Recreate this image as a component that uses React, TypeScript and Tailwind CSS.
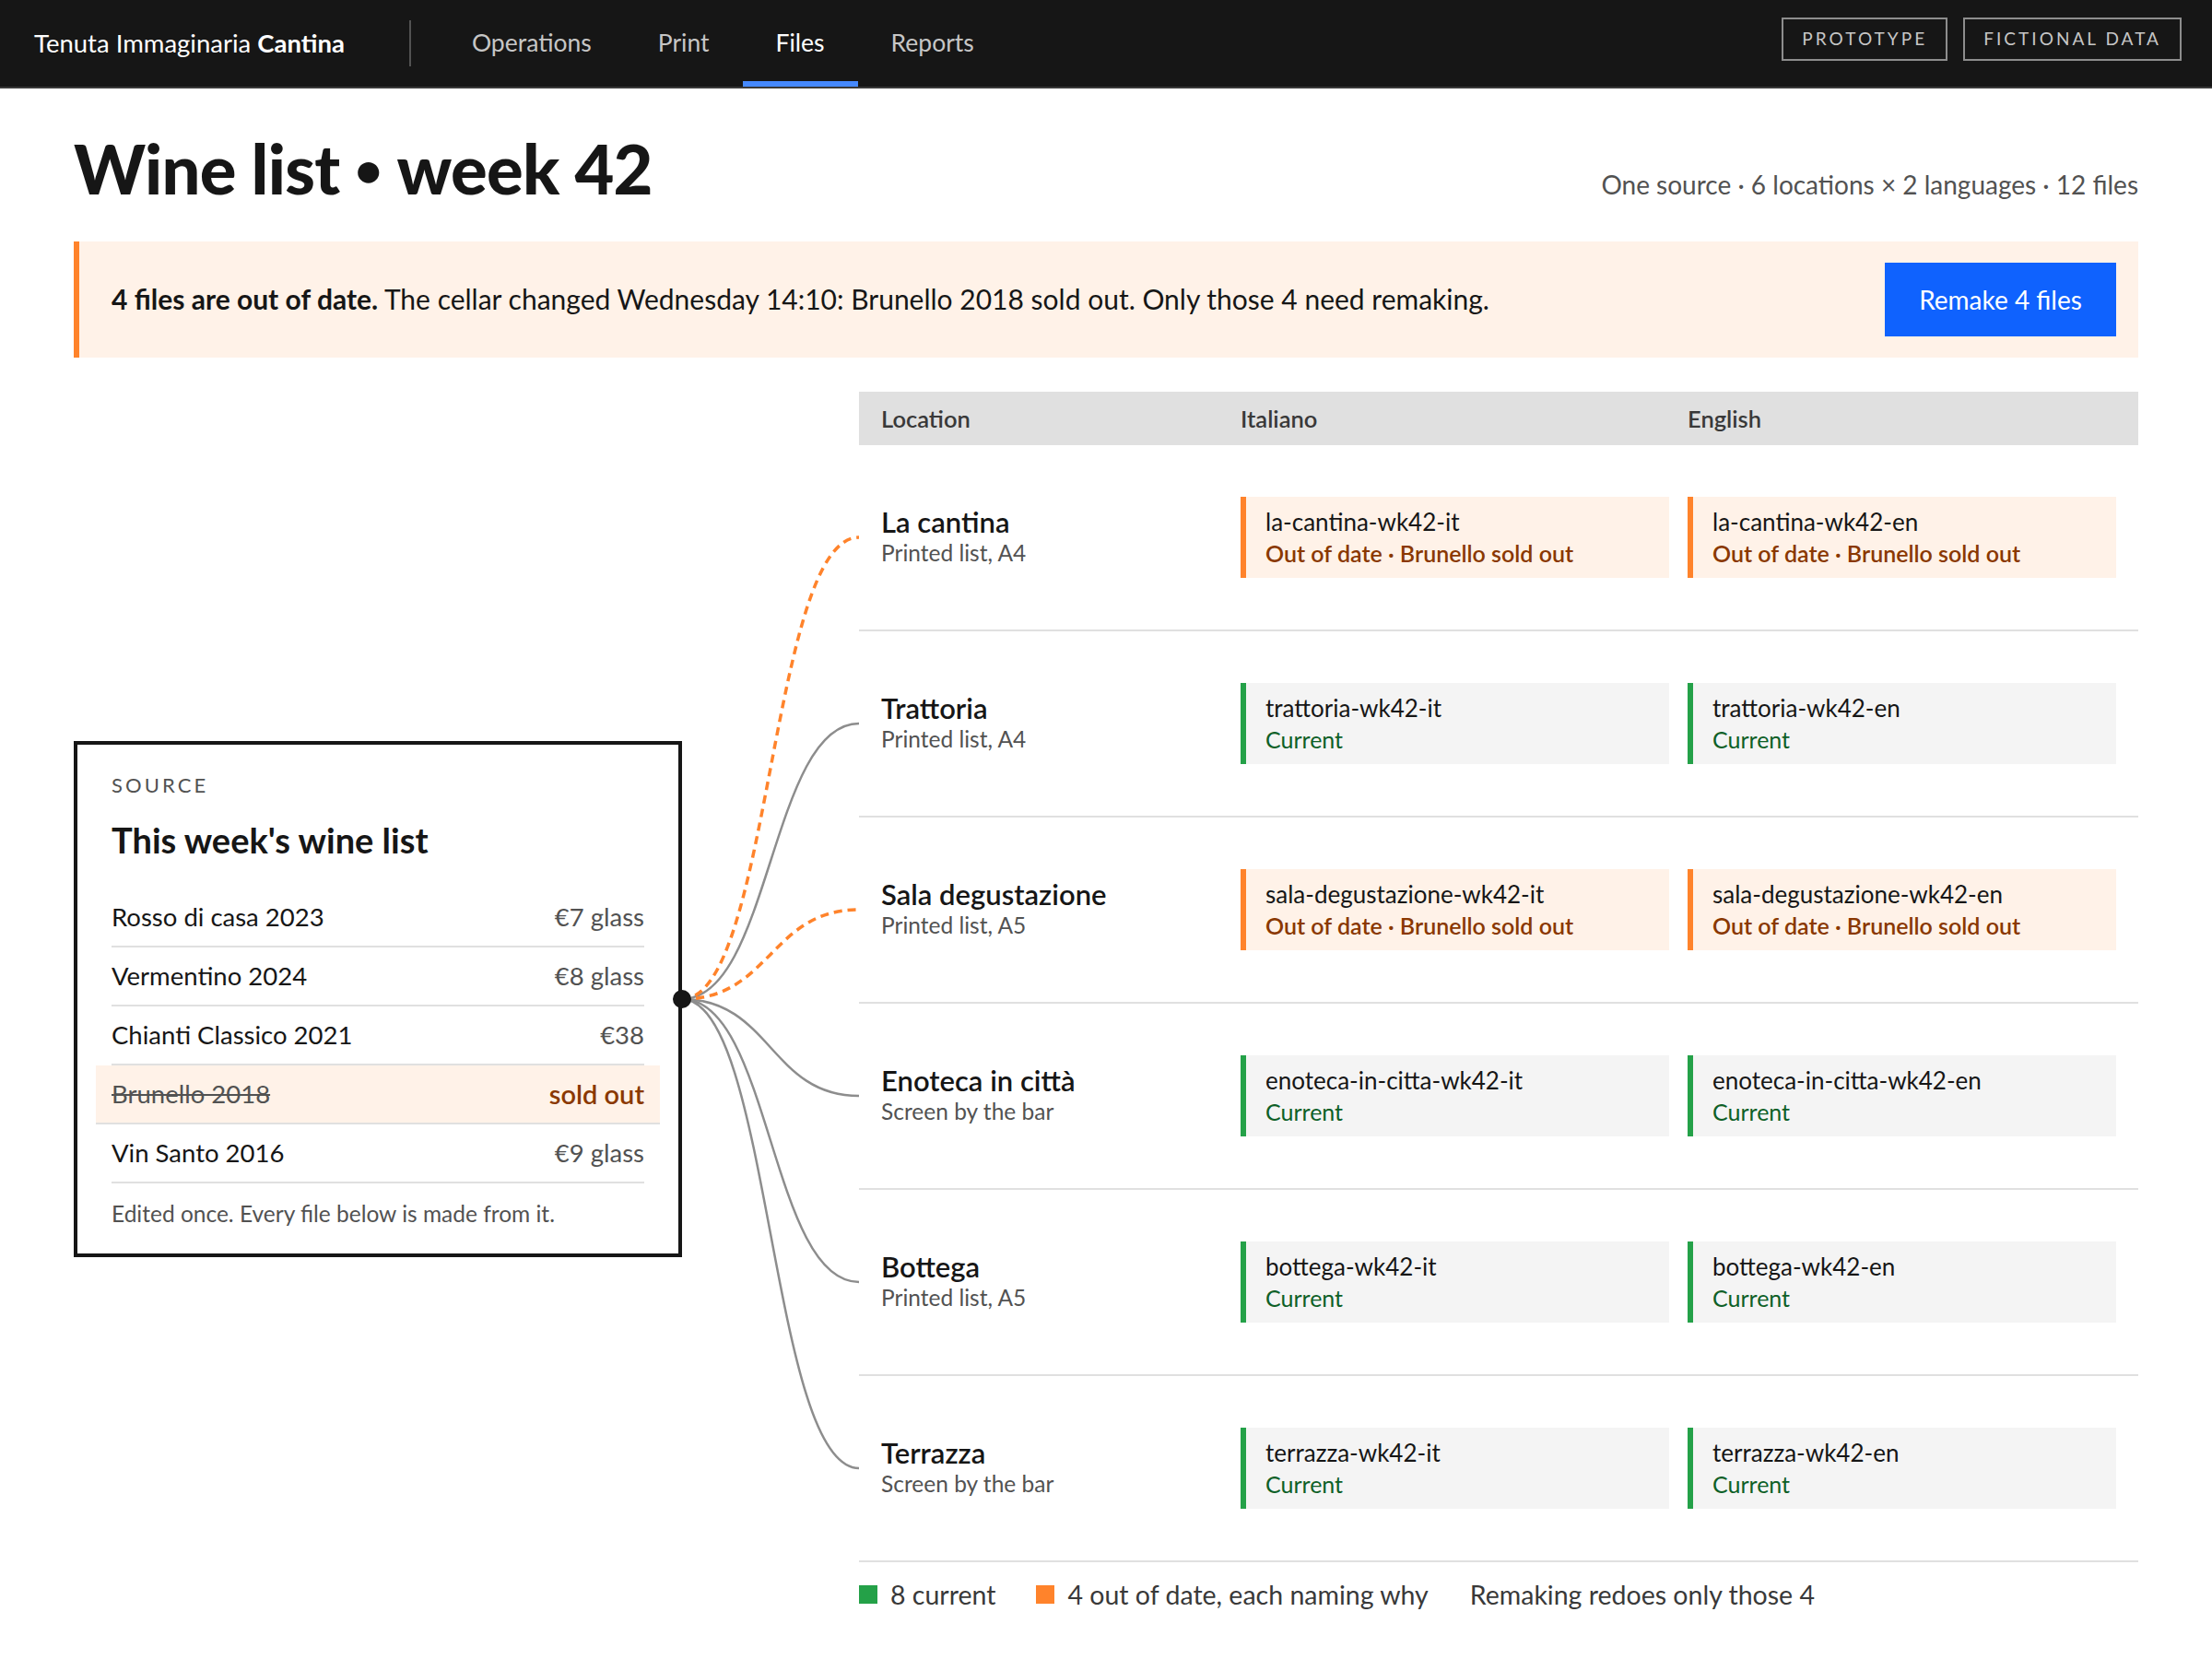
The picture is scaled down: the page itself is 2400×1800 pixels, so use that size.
const font = { fontFamily: "Lato, 'Noto Sans', sans-serif" };

type Loc = {
  name: string;
  kind: string;
  slug: string;
  stale: boolean;
};

const locations: Loc[] = [
  { name: "La cantina", kind: "Printed list, A4", slug: "la-cantina-wk42", stale: true },
  { name: "Trattoria", kind: "Printed list, A4", slug: "trattoria-wk42", stale: false },
  { name: "Sala degustazione", kind: "Printed list, A5", slug: "sala-degustazione-wk42", stale: true },
  { name: "Enoteca in città", kind: "Screen by the bar", slug: "enoteca-in-citta-wk42", stale: false },
  { name: "Bottega", kind: "Printed list, A5", slug: "bottega-wk42", stale: false },
  { name: "Terrazza", kind: "Screen by the bar", slug: "terrazza-wk42", stale: false },
];

const wines = [
  { name: "Rosso di casa 2023", price: "€7 glass" },
  { name: "Vermentino 2024", price: "€8 glass" },
  { name: "Chianti Classico 2021", price: "€38" },
  { name: "Brunello 2018", price: "sold out", gone: true },
  { name: "Vin Santo 2016", price: "€9 glass" },
];

function FileCell({ file, stale }: { file: string; stale: boolean }) {
  return (
    <div
      className={`h-[88px] border-l-[6px] pl-[21px] py-[10px] leading-[34px] ${
        stale ? "bg-[#fff2e8] border-[#ff832b]" : "bg-[#f4f4f4] border-[#24a148]"
      }`}
    >
      <div className="text-[26px] text-[#161616]">{file}</div>
      {stale ? (
        <div className="text-[25px] font-semibold text-[#8a3800]">Out of date · Brunello sold out</div>
      ) : (
        <div className="text-[25px] text-[#0e6027]">Current</div>
      )}
    </div>
  );
}

function Connectors() {
  const y0 = 659;
  const paths = locations.map((l, i) => {
    const y = 158 + 202 * i;
    return { d: `M 0 ${y0} C 96 ${y0}, 96 ${y}, 192 ${y}`, stale: l.stale };
  });
  return (
    <svg width="192" height="1270" className="block overflow-visible">
      {paths
        .filter((p) => !p.stale)
        .map((p, i) => (
          <path key={"g" + i} d={p.d} fill="none" stroke="#8d8d8d" strokeWidth="2.5" />
        ))}
      {paths
        .filter((p) => p.stale)
        .map((p, i) => (
          <path
            key={"o" + i}
            d={p.d}
            fill="none"
            stroke="#ff832b"
            strokeWidth="3.5"
            strokeDasharray="9 6"
          />
        ))}
      <circle cx="0" cy={y0} r="10" fill="#161616" />
    </svg>
  );
}

export default function App() {
  return (
    <div className="min-h-screen bg-white text-[#161616]" style={font}>
      {/* top bar */}
      <header className="h-[96px] bg-[#161616] border-b-2 border-[#393939] flex items-center pl-[37px] pr-[33px]">
        <div className="text-[27.5px] text-white">
          Tenuta Immaginaria <span className="font-bold">Cantina</span>
        </div>
        <div className="ml-[70px] mr-[30px] w-[2px] h-[50px] bg-[#525252]" />
        <nav className="flex h-full">
          {["Operations", "Print", "Files", "Reports"].map((t) => (
            <div
              key={t}
              className={`relative flex items-center px-9 text-[26.5px] ${
                t === "Files" ? "text-white" : "text-[#c6c6c6]"
              }`}
            >
              {t}
              {t === "Files" && (
                <div className="absolute left-0 right-0 bottom-0 h-[6px] bg-[#4589ff]" />
              )}
            </div>
          ))}
        </nav>
        <div className="ml-auto mb-[9px] flex gap-[17px]">
          <span className="h-[47px] flex items-center px-[20px] border-2 border-[#8d8d8d] text-[19px] tracking-[0.16em] text-[#c6c6c6]">
            PROTOTYPE
          </span>
          <span className="h-[47px] flex items-center px-[20px] border-2 border-[#8d8d8d] text-[19px] tracking-[0.16em] text-[#c6c6c6]">
            FICTIONAL DATA
          </span>
        </div>
      </header>

      <main className="px-20">
        <div className="pt-[43px] flex items-baseline justify-between">
          <h1 className="text-[74px] leading-[1.2] font-black tracking-[-0.01em]">
            Wine list
            <span className="inline-block mx-[17px] pb-[18px] text-[50px] align-middle leading-none">•</span>
            week 42
          </h1>
          <div className="text-[28px] text-[#525252]">
            One source · 6 locations × 2 languages · 12 files
          </div>
        </div>

        <div className="mt-[34px] h-[126px] bg-[#fff2e8] border-l-[6px] border-[#ff832b] pl-[35px] pr-6 flex items-center justify-between">
          <p className="text-[30px]">
            <span className="font-bold">4 files are out of date.</span> The cellar changed Wednesday 14:10:
            Brunello 2018 sold out. Only those 4 need remaking.
          </p>
          <button className="w-[251px] h-[80px] bg-[#0f62fe] text-white text-[28px]">Remake 4 files</button>
        </div>

        <div className="mt-[37px] grid grid-cols-[660px_192px_1fr]">
          {/* source */}
          <div className="flex items-center pt-[48px] pb-[52px]">
            <div className="w-full border-4 border-[#161616] px-[37px] pt-[29px] pb-[28px]">
              <div className="text-[22px] leading-[30px] tracking-[0.14em] text-[#525252]">SOURCE</div>
              <div className="mt-[22px] text-[38px] leading-[44px] font-bold">This week's wine list</div>
              <div className="mt-[31px]">
                {wines.map((w) =>
                  w.gone ? (
                    <div
                      key={w.name}
                      className="-mx-[17px] px-[17px] h-[64px] flex items-center justify-between bg-[#fff2e8] border-b-2 border-[#e0e0e0] text-[27.5px]"
                    >
                      <span className="line-through decoration-2 text-[#525252]">{w.name}</span>
                      <span className="text-[29px] font-semibold text-[#8a3800]">{w.price}</span>
                    </div>
                  ) : (
                    <div
                      key={w.name}
                      className="h-[64px] flex items-center justify-between border-b-2 border-[#e0e0e0] text-[27.5px]"
                    >
                      <span>{w.name}</span>
                      <span className="text-[#525252]">{w.price}</span>
                    </div>
                  )
                )}
              </div>
              <div className="mt-[18px] text-[24.5px] leading-[30px] text-[#525252]">
                Edited once. Every file below is made from it.
              </div>
            </div>
          </div>

          {/* connectors */}
          <div>
            <Connectors />
          </div>

          {/* table */}
          <div>
            <div className="h-[58px] bg-[#e0e0e0] grid grid-cols-[370px_465px_465px] gap-x-[20px] px-6 items-center text-[25.5px] font-semibold text-[#393939]">
              <div>Location</div>
              <div>Italiano</div>
              <div>English</div>
            </div>
            {locations.map((l) => (
              <div
                key={l.slug}
                className="grid grid-cols-[370px_465px_465px] gap-x-[20px] px-6 py-[56px] border-b-2 border-[#e0e0e0]"
              >
                <div className="pt-[10px] leading-[34px]">
                  <div className="text-[31px] font-semibold">{l.name}</div>
                  <div className="text-[24.5px] text-[#525252]">{l.kind}</div>
                </div>
                <FileCell file={`${l.slug}-it`} stale={l.stale} />
                <FileCell file={`${l.slug}-en`} stale={l.stale} />
              </div>
            ))}
            <div className="pt-[18px] flex items-center text-[28.5px] leading-[34px] text-[#393939]">
              <span className="w-5 h-5 bg-[#24a148] mr-[14px]" />
              <span>8 current</span>
              <span className="w-5 h-5 bg-[#ff832b] ml-[44px] mr-[14px]" />
              <span>4 out of date, each naming why</span>
              <span className="ml-[45px]">Remaking redoes only those 4</span>
            </div>
          </div>
        </div>
      </main>
    </div>
  );
}
